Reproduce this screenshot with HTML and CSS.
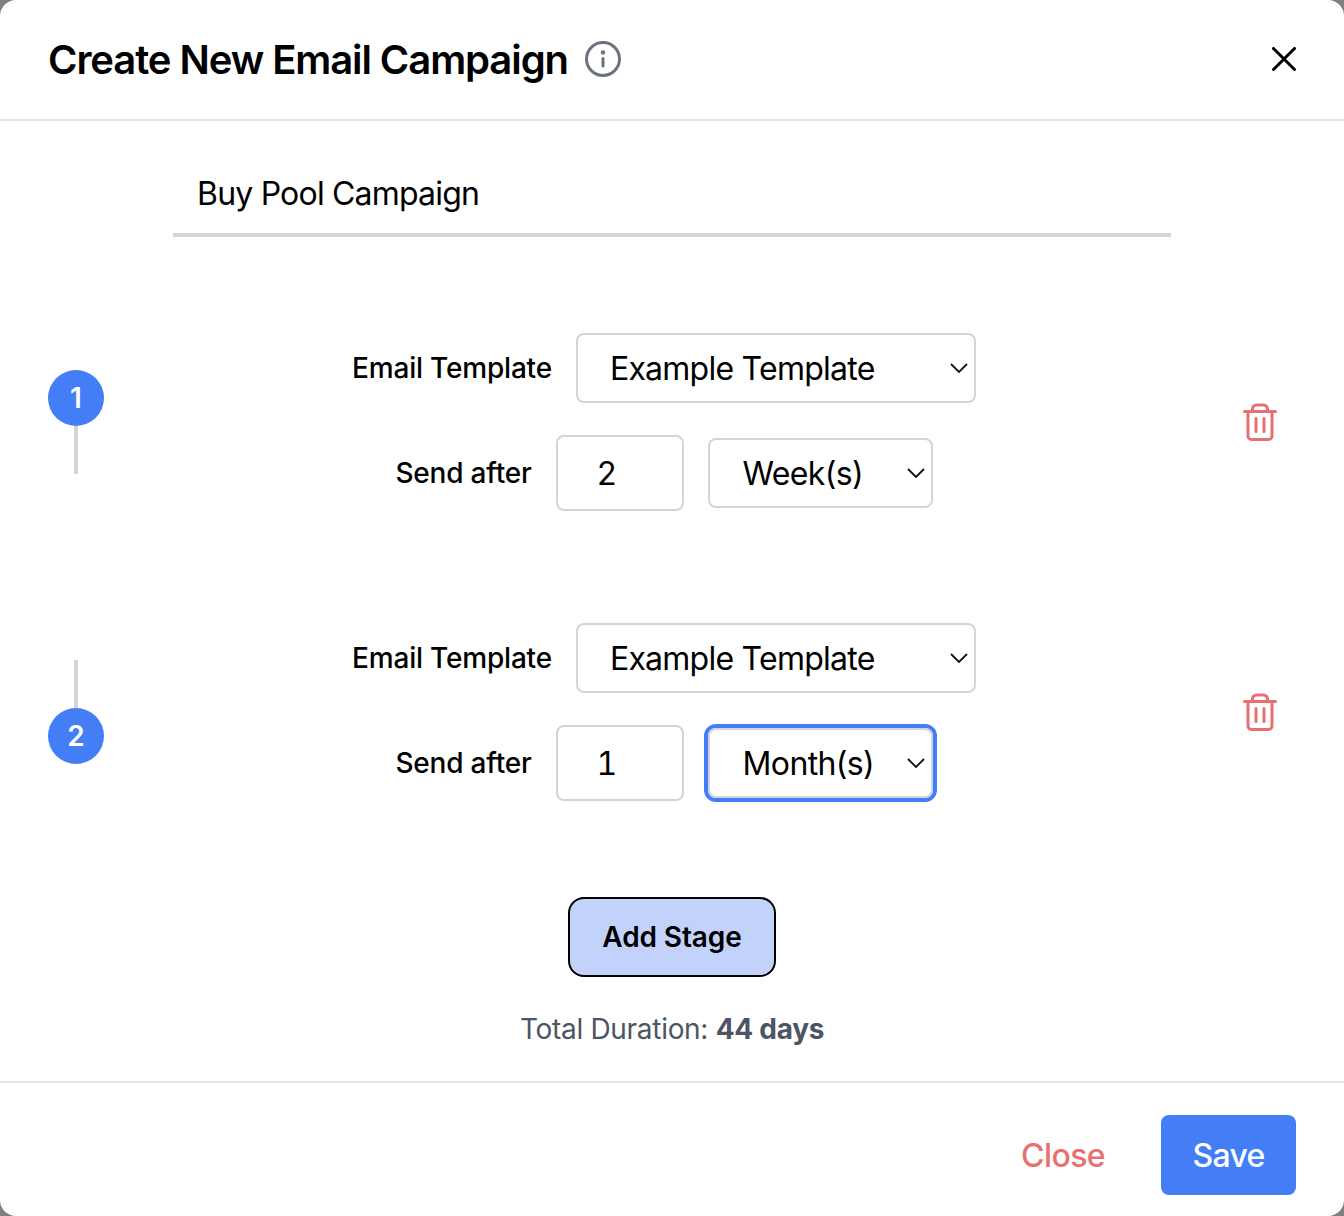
FILE: index.html
```html
<!DOCTYPE html>
<html lang="en">
<head>
<meta charset="utf-8">
<title>Create New Email Campaign</title>
<link rel="stylesheet" href="styles.css">
</head>
<body>
<div class="modal">
  <header class="modal-header">
    <div class="title-group">
      <h1 class="title">Create New Email Campaign</h1>
      <svg class="info-icon" viewBox="0 0 36 36" fill="none" stroke="#6b7280" stroke-width="3" stroke-linecap="round"><circle cx="18" cy="18" r="16.5"/><path d="M18 17.5v7.5"/><circle cx="18" cy="11.5" r="1" stroke-width="2.4"/></svg>
    </div>
    <button class="icon-button" type="button" aria-label="Close">
      <svg class="close-icon" viewBox="0 0 24 24" fill="none" stroke="#000" stroke-width="3" stroke-linecap="round"><path d="M1.5 1.5l21 21M22.5 1.5l-21 21"/></svg>
    </button>
  </header>

  <main class="modal-body">
    <input class="name-input" type="text" value="Buy Pool Campaign">

    <section class="stage">
      <div class="step">
        <div class="step-circle">1</div>
        <div class="step-line"></div>
      </div>
      <div class="stage-form">
        <div class="form-row">
          <label class="field-label">Email Template</label>
          <div class="select-wrap template-select">
            <select class="select"><option>Example Template</option></select>
            <svg class="chevron" viewBox="0 0 18 10" fill="none" stroke="#111" stroke-width="1.8"><path d="M1 1l8 8 8-8"/></svg>
          </div>
        </div>
        <div class="form-row">
          <label class="field-label">Send after</label>
          <input class="number-input" type="text" value="2">
          <div class="select-wrap unit-select">
            <select class="select"><option>Week(s)</option></select>
            <svg class="chevron" viewBox="0 0 18 10" fill="none" stroke="#111" stroke-width="1.8"><path d="M1 1l8 8 8-8"/></svg>
          </div>
        </div>
      </div>
      <button class="trash-button" type="button" aria-label="Delete stage">
        <svg class="trash-icon" viewBox="0 0 36 40" fill="none" stroke="#e77171" stroke-width="3" stroke-linecap="round" stroke-linejoin="round"><path d="M2.500 9.500h31M10.500 9.500V7a4 4 0 0 1 4-4h7a4 4 0 0 1 4 4v2.500M6 9.500V34a3.500 3.500 0 0 0 3.500 3.500h17A3.500 3.500 0 0 0 30 34V9.500M14 16.500v13M22 16.500v13"/></svg>
      </button>
    </section>

    <section class="stage stage-second">
      <div class="step">
        <div class="step-line"></div>
        <div class="step-circle">2</div>
      </div>
      <div class="stage-form">
        <div class="form-row">
          <label class="field-label">Email Template</label>
          <div class="select-wrap template-select">
            <select class="select"><option>Example Template</option></select>
            <svg class="chevron" viewBox="0 0 18 10" fill="none" stroke="#111" stroke-width="1.8"><path d="M1 1l8 8 8-8"/></svg>
          </div>
        </div>
        <div class="form-row">
          <label class="field-label">Send after</label>
          <input class="number-input" type="text" value="1">
          <div class="select-wrap unit-select is-focused">
            <select class="select"><option>Month(s)</option></select>
            <svg class="chevron" viewBox="0 0 18 10" fill="none" stroke="#111" stroke-width="1.8"><path d="M1 1l8 8 8-8"/></svg>
          </div>
        </div>
      </div>
      <button class="trash-button" type="button" aria-label="Delete stage">
        <svg class="trash-icon" viewBox="0 0 36 40" fill="none" stroke="#e77171" stroke-width="3" stroke-linecap="round" stroke-linejoin="round"><path d="M2.500 9.500h31M10.500 9.500V7a4 4 0 0 1 4-4h7a4 4 0 0 1 4 4v2.500M6 9.500V34a3.500 3.500 0 0 0 3.500 3.500h17A3.500 3.500 0 0 0 30 34V9.500M14 16.500v13M22 16.500v13"/></svg>
      </button>
    </section>

    <button class="add-stage" type="button">Add Stage</button>
    <p class="duration">Total Duration: <strong>44 days</strong></p>
  </main>

  <footer class="modal-footer">
    <button class="close-button" type="button">Close</button>
    <button class="save-button" type="button">Save</button>
  </footer>
</div>
</body>
</html>
```

FILE: styles.css
```css
* {
  box-sizing: border-box;
}

html,
body {
  margin: 0;
  height: 100%;
  overflow: hidden;
  background: #808080;
}

body {
  font-family: Inter, "Liberation Sans", sans-serif;
  color: #000;
}

button,
input,
select {
  font-family: inherit;
  color: inherit;
}

.modal {
  display: flex;
  flex-direction: column;
  height: 1216px;
  background: #fff;
  border-radius: 16px;
  overflow: hidden;
}

.modal-header {
  display: flex;
  align-items: center;
  justify-content: space-between;
  height: 121px;
  padding: 0 48px 1px;
  border-bottom: 2px solid #e5e7eb;
  flex: none;
}

.title-group {
  display: flex;
  align-items: center;
  gap: 17px;
}

.title {
  margin: 1px 0 0;
  font-size: 40px;
  line-height: 56px;
  font-weight: 600;
  letter-spacing: -1.08px;
}

.info-icon {
  width: 36px;
  height: 36px;
  display: block;
}

.icon-button {
  display: block;
  padding: 0;
  border: 0;
  background: none;
}

.close-icon {
  display: block;
  width: 24px;
  height: 24px;
}

.modal-body {
  flex: 1;
  display: flex;
  flex-direction: column;
  align-items: center;
  padding: 28px 48px 0;
}

.name-input {
  display: block;
  width: 998px;
  height: 88px;
  padding: 5px 24px 0;
  border: 0;
  border-bottom: 4px solid #d1d5db;
  font-size: 32px;
  letter-spacing: -0.8px;
  outline: none;
  background: #fff;
}

.stage {
  align-self: stretch;
  display: flex;
  align-items: center;
  margin-top: 96px;
}

.stage-second {
  margin-top: 112px;
}

.step {
  width: 56px;
  flex: none;
  display: flex;
  flex-direction: column;
  align-items: center;
}

.step-circle {
  width: 56px;
  height: 56px;
  border-radius: 50%;
  background: #437ef7;
  color: #fff;
  font-size: 28px;
  font-weight: 600;
  line-height: 56px;
  text-align: center;
}

.step-line {
  width: 4px;
  height: 48px;
  background: #d1d5db;
}

.stage-form {
  flex: 1;
  display: flex;
  flex-direction: column;
  align-items: center;
  gap: 32px;
}

.form-row {
  display: flex;
  align-items: center;
  gap: 24px;
}

.field-label {
  font-size: 28px;
  line-height: 40px;
  font-weight: 500;
  letter-spacing: -0.2px;
}

.select-wrap {
  position: relative;
  height: 70px;
  border-radius: 8px;
}

.template-select {
  width: 400px;
}

.unit-select {
  width: 225px;
}

.unit-select .select {
  padding-left: 33px;
  padding-top: 1px;
  letter-spacing: -0.65px;
}

.is-focused {
  box-shadow: 0 0 0 4px #437ef7;
}

.select {
  display: block;
  width: 100%;
  height: 100%;
  padding: 0 40px 0 32px;
  border: 2px solid #d1d5db;
  border-radius: 8px;
  background: #fff;
  font-size: 32px;
  letter-spacing: -0.75px;
  appearance: none;
  outline: none;
}

.chevron {
  position: absolute;
  top: 30px;
  right: 8px;
  width: 18px;
  height: 10px;
  pointer-events: none;
}

.number-input {
  display: block;
  width: 128px;
  height: 76px;
  padding: 1px 0 0 39px;
  border: 2px solid #d1d5db;
  border-radius: 8px;
  font-size: 32px;
  font-variant-numeric: tabular-nums;
  outline: none;
  background: #fff;
}

.trash-button {
  flex: none;
  width: 72px;
  display: flex;
  justify-content: center;
  padding: 0;
  border: 0;
  background: none;
}

.trash-icon {
  display: block;
  width: 36px;
  height: 40px;
}

.add-stage {
  display: block;
  flex: none;
  width: 208px;
  height: 80px;
  margin-top: 96px;
  border: 2px solid #000;
  border-radius: 16px;
  background: #c3d2fb;
  font-size: 28px;
  font-weight: 600;
  letter-spacing: -0.1px;
}

.duration {
  margin: 32px 0 0;
  font-size: 28px;
  line-height: 40px;
  letter-spacing: -0.3px;
  color: #4b5563;
}

.duration strong {
  font-weight: 700;
}

.modal-footer {
  flex: none;
  display: flex;
  justify-content: flex-end;
  align-items: center;
  gap: 24px;
  height: 135px;
  padding: 32px 48px 21px;
  border-top: 2px solid #e5e7eb;
}

.close-button {
  padding: 0 32px;
  height: 80px;
  border: 0;
  background: none;
  color: #e77171;
  font-size: 32px;
  font-weight: 500;
  letter-spacing: -0.6px;
}

.save-button {
  width: 135px;
  height: 80px;
  padding: 0;
  border: 0;
  border-radius: 8px;
  background: #437ef7;
  color: #fff;
  font-size: 32px;
  font-weight: 500;
  letter-spacing: -0.7px;
}
```
